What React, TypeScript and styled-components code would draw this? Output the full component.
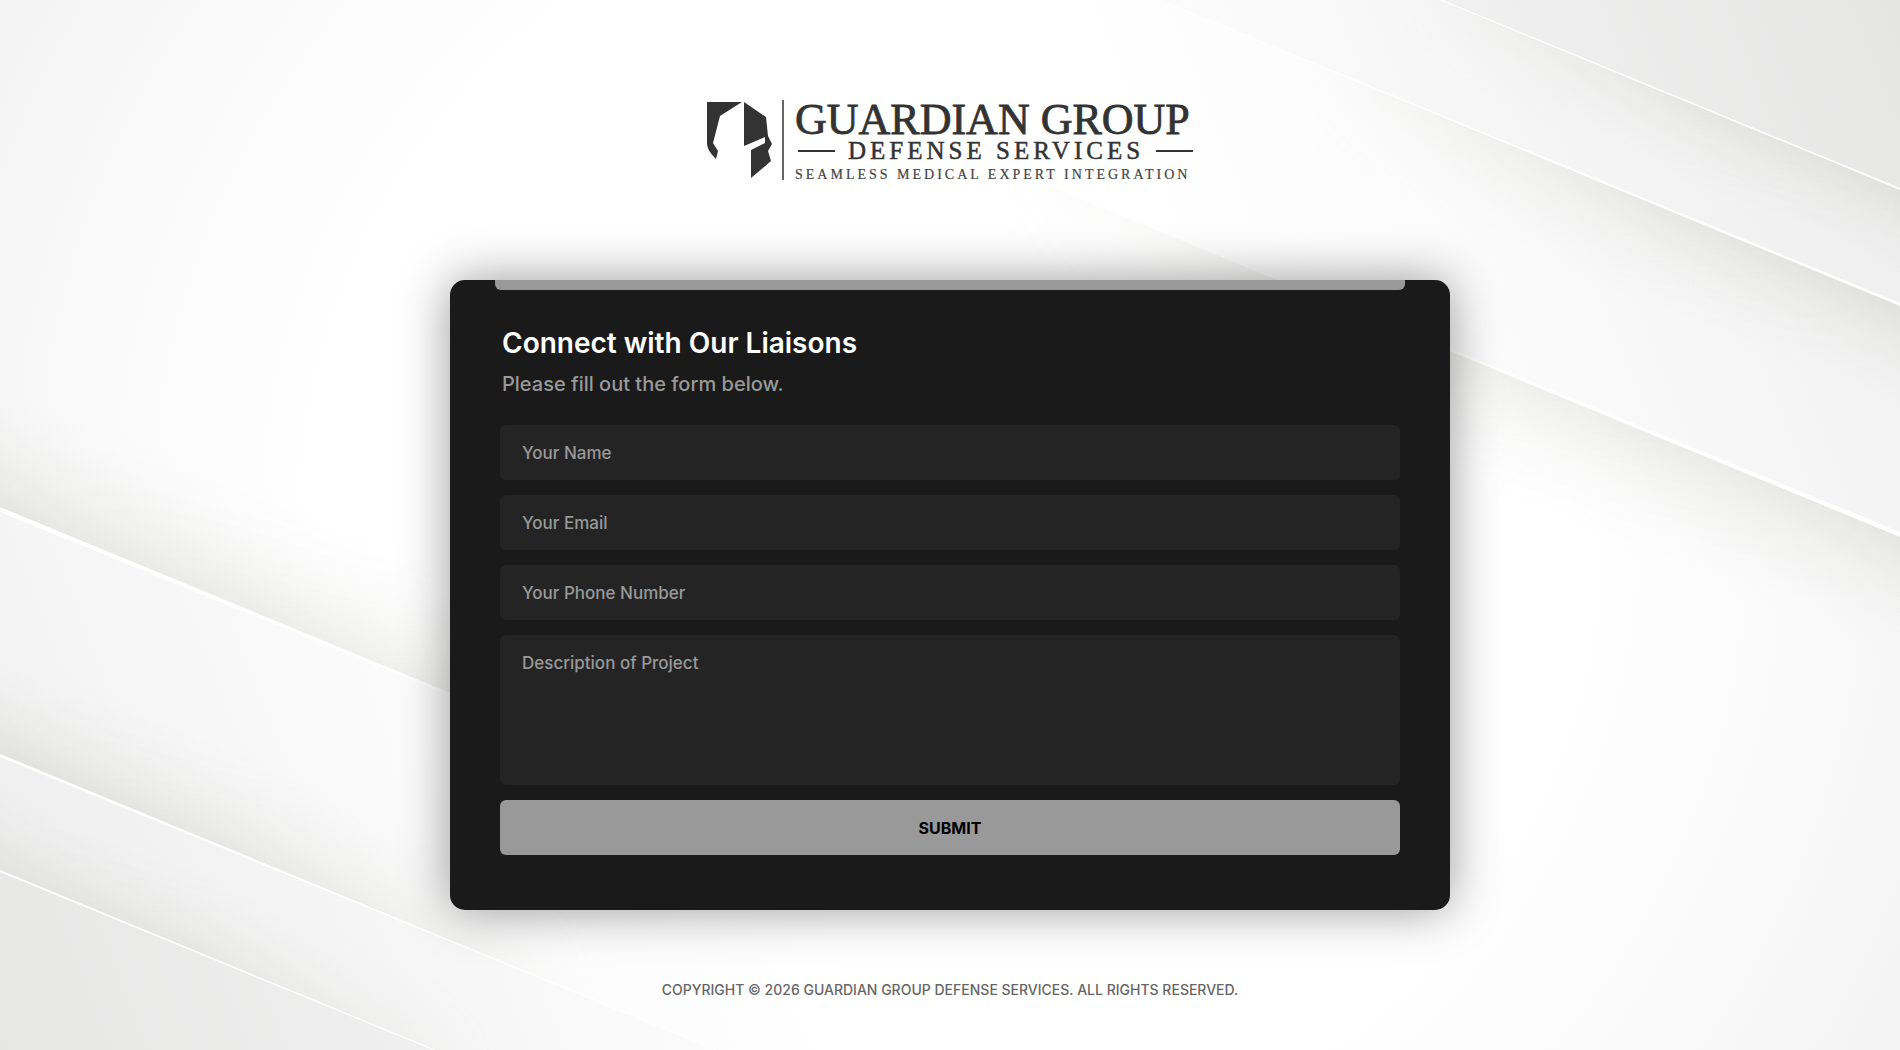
import React from "react";
import styled, { createGlobalStyle } from "styled-components";

const GlobalStyle = createGlobalStyle`
  *, *::before, *::after { box-sizing: border-box; }
  body { margin: 0; background: #fff; font-family: Inter, "Liberation Sans", sans-serif; }
`;

const Page = styled.div`
  position: relative;
  min-height: 100vh;
  display: flex;
  flex-direction: column;
  align-items: center;
  gap: 70px;
  padding: 100px 20px 50px;
  overflow: hidden;
`;

const Backdrop = styled.svg`
  position: absolute;
  inset: 0;
  width: 100%;
  height: 100%;
  z-index: -1;
`;

const LogoLink = styled.a`
  display: block;
  line-height: 0;
  margin-bottom: 30px;
`;

const LogoDrawing = styled.svg`
  overflow: visible;
`;

const Card = styled.main`
  width: 100%;
  max-width: 1000px;
  padding: 0 50px 55px;
  background: #1a1a1a;
  border-radius: 15px;
  box-shadow: 0 0 50px rgba(0, 0, 0, 0.4);
`;

const Accent = styled.div`
  height: 10px;
  margin: 0 -5px 34px;
  background: #999;
  border-radius: 0 0 6px 6px;
`;

const Title = styled.h1`
  margin: 0 2px;
  color: #fff;
  font-size: 28px;
  font-weight: 600;
  line-height: 38px;
`;

const Lead = styled.p`
  margin: 7px 2px 26px;
  color: #999;
  font-size: 20px;
  font-weight: 500;
  line-height: 30px;
`;

const Form = styled.form`
  display: flex;
  flex-direction: column;
  gap: 15px;
`;

const Field = styled.input`
  display: block;
  width: 100%;
  height: 55px;
  padding: 0 22px;
  border: 0;
  border-radius: 6px;
  background: #242424;
  color: #fff;
  font: 500 17px/24px Inter, "Liberation Sans", sans-serif;
  &::placeholder { color: #999; opacity: 1; }
`;

const Area = styled(Field).attrs({ as: "textarea" })`
  height: 150px;
  padding: 16px 22px;
  resize: none;
`;

const Submit = styled.button`
  height: 55px;
  border: 0;
  border-radius: 6px;
  background: #999;
  color: #000;
  font: 700 16px/24px Inter, "Liberation Sans", sans-serif;
  text-transform: uppercase;
`;

const Copyright = styled.footer`
  color: #666;
  font-size: 14px;
  font-weight: 500;
  line-height: 20px;
  text-transform: uppercase;
`;

type Stop = [offset: number, color: string];

type SheetProps = {
  id: string;
  /** height of the edge at the near side of the canvas */
  edge: number;
  flip?: boolean;
  stops: Stop[];
  reach: number;
  depth: number;
  shade: number;
  thickness: number;
};

const SLOPE = 0.412;

/* A sheet of paper whose lower edge slants down to the right and casts a shadow. */
function Sheet({ id, edge, flip, stops, reach, depth, shade, thickness }: SheetProps) {
  const startY = edge - SLOPE * 1900;
  const turn = flip ? "rotate(180 950 525)" : undefined;
  return (
    <g transform={turn}>
      <linearGradient id={`${id}-fill`} gradientUnits="userSpaceOnUse" x1="1900" y1={edge - 200} x2="1250" y2={edge + 50}>
        {stops.map(([o, c]) => <stop key={o} offset={o} stopColor={c} />)}
      </linearGradient>
      <linearGradient
        id={`${id}-shadow`}
        gradientUnits="userSpaceOnUse"
        x1="1900" y1={edge} x2={1900 - depth * 0.38} y2={edge + depth * 0.92}
      >
        <stop offset="0" stopColor="#c9cac0" stopOpacity={shade} />
        <stop offset="0.35" stopColor="#cdcdc8" stopOpacity={shade * 0.5} />
        <stop offset="0.7" stopColor="#d3d3d1" stopOpacity={shade * 0.15} />
        <stop offset="1" stopColor="#e0e0e0" stopOpacity="0" />
      </linearGradient>
      <linearGradient id={`${id}-fade`} gradientUnits="userSpaceOnUse" x1="1900" y1="0" x2={1900 - reach} y2="0">
        <stop offset="0" stopColor="#fff" />
        <stop offset="0.4" stopColor="#ccc" />
        <stop offset="1" stopColor="#000" />
      </linearGradient>
      <mask id={`${id}-mask`} maskUnits="userSpaceOnUse" x="0" y="-900" width="1900" height="2400">
        <rect x="0" y="-900" width="1900" height="2400" fill={`url(#${id}-fade)`} />
      </mask>
      <path
        d={`M0 ${startY}L1900 ${edge}V${edge + depth * 1.2}L0 ${startY + depth * 1.2}Z`}
        fill={`url(#${id}-shadow)`}
        mask={`url(#${id}-mask)`}
      />
      <path d={`M0 ${startY}L1900 ${edge}V-900H0Z`} fill={`url(#${id}-fill)`} />
      <path
        d={`M900 ${edge - SLOPE * 1000}L1900 ${edge - thickness}V${edge + 1}Z`}
        fill="#fff"
      />
    </g>
  );
}

const sheets: SheetProps[] = [
  { id: "r1", edge: 536, stops: [[0, "#f2f2f2"], [0.6, "#fcfcfc"], [1, "#fff"]], reach: 900, depth: 120, shade: 0.38, thickness: 4 },
  { id: "r2", edge: 305, stops: [[0, "#eeeeee"], [0.5, "#f5f5f5"], [1, "#fdfdfd"]], reach: 600, depth: 100, shade: 0.42, thickness: 2 },
  { id: "r3", edge: 189, stops: [[0, "#e5e5e4"], [0.5, "#eeeeee"], [1, "#f9f9f9"]], reach: 500, depth: 80, shade: 0.38, thickness: 1 },
  { id: "l1", edge: 542, flip: true, stops: [[0, "#f3f3f3"], [0.6, "#fcfcfc"], [1, "#fff"]], reach: 900, depth: 120, shade: 0.38, thickness: 4 },
  { id: "l2", edge: 295, flip: true, stops: [[0, "#eeeeee"], [0.5, "#f5f5f5"], [1, "#fdfdfd"]], reach: 600, depth: 100, shade: 0.42, thickness: 2 },
  { id: "l3", edge: 179, flip: true, stops: [[0, "#e6e6e5"], [0.5, "#eeeeee"], [1, "#f9f9f9"]], reach: 500, depth: 80, shade: 0.34, thickness: 1 },
];

function Background() {
  return (
    <Backdrop viewBox="0 0 1900 1050" preserveAspectRatio="xMidYMid slice" aria-hidden="true">
      <radialGradient id="base" gradientUnits="userSpaceOnUse" cx="0" cy="0" r="1" gradientTransform="translate(950 525) scale(1150 1150)">
        <stop offset="0.54" stopColor="#fff" />
        <stop offset="0.75" stopColor="#fafafa" />
        <stop offset="1" stopColor="#f1f1f1" />
      </radialGradient>
      <rect width="1900" height="1050" fill="url(#base)" />
      {sheets.map((s) => <Sheet key={s.id} {...s} />)}
    </Backdrop>
  );
}

function Logo() {
  return (
    <LogoDrawing width="488" height="80" viewBox="0 0 488 80" role="img" aria-label="Guardian Group Defense Services">
      <g fill="#333">
        <path d="M1 2H36L14 16L7 43L12 51L10 59C5 54 1 49 1 43Z" />
        <path d="M38 2L60 17L62 36L66 44L62 51L65 61L45 78V50L59 43V37L38 46Z" />
        <path d="M76 0H78V80H76Z" opacity="0.75" />
        <path d="M92 50H129V52H92ZM450 50H487V52H450Z" />
      </g>
      <g fill="#333" fontFamily='"Liberation Serif", serif'>
        <text x="89" y="34" fontSize="44" stroke="#333" strokeWidth="0.8">GUARDIAN GROUP</text>
        <text x="142" y="59" fontSize="25" letterSpacing="4" stroke="#333" strokeWidth="0.5">DEFENSE SERVICES</text>
        <text x="89" y="79" fontSize="14" letterSpacing="3" fill="#444" stroke="#444" strokeWidth="0.2">SEAMLESS MEDICAL EXPERT INTEGRATION</text>
      </g>
    </LogoDrawing>
  );
}

export default function App() {
  return (
    <>
      <GlobalStyle />
      <Page>
        <Background />
        <LogoLink href="#"><Logo /></LogoLink>
        <Card>
          <Accent />
          <Title>Connect with Our Liaisons</Title>
          <Lead>Please fill out the form below.</Lead>
          <Form onSubmit={(e) => e.preventDefault()}>
            <Field type="text" name="name" placeholder="Your Name" aria-label="Your Name" />
            <Field type="email" name="email" placeholder="Your Email" aria-label="Your Email" />
            <Field type="tel" name="phone" placeholder="Your Phone Number" aria-label="Your Phone Number" />
            <Area name="description" placeholder="Description of Project" aria-label="Description of Project" />
            <Submit type="submit">Submit</Submit>
          </Form>
        </Card>
        <Copyright>Copyright © 2026 Guardian Group Defense Services. All rights reserved.</Copyright>
      </Page>
    </>
  );
}
